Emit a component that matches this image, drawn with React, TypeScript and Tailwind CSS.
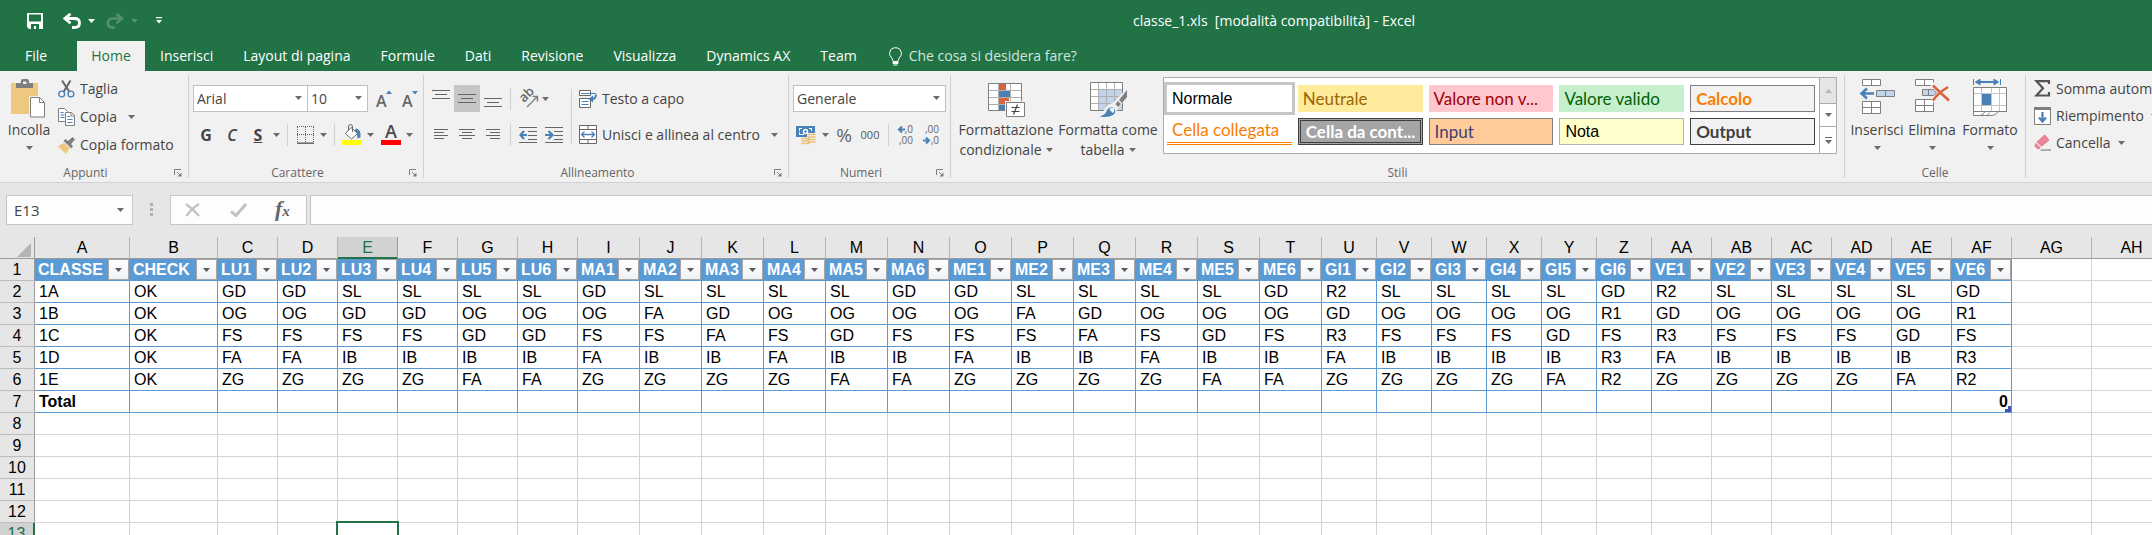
import type { ReactNode } from "react";

const GREY = "#7f7f7f";
const DARK = "#666666";
const BLUE = "#4a80b8";

function Caret({ className = "" }: { className?: string }) {
  return (
    <svg viewBox="0 0 7 4" className={`h-1 w-[7px] shrink-0 ${className}`} fill="currentColor" aria-hidden="true">
      <path d="M0 0h7L3.5 4z" />
    </svg>
  );
}

function CaretButton({ label, className = "" }: { label: string; className?: string }) {
  return (
    <button type="button" aria-label={label} className={`flex h-6 w-[11px] shrink-0 items-center justify-center text-[#6a6a6a] ${className}`}>
      <Caret />
    </button>
  );
}

function IconButton({ label, children, className = "" }: { label: string; children: ReactNode; className?: string }) {
  return (
    <button type="button" aria-label={label} className={`flex h-[27px] shrink-0 items-center justify-center ${className}`}>
      {children}
    </button>
  );
}

function Sep({ className = "h-[22px]" }: { className?: string }) {
  return <div className={`w-px shrink-0 bg-[#d0d0d0] ${className}`} />;
}

function Group({ label, launcher, className, children }: { label: string; launcher?: boolean; className: string; children: ReactNode }) {
  return (
    <>
      <section aria-label={label} className={`flex flex-col ${className}`}>
        <div className="flex h-[88px]">{children}</div>
        <div className="flex h-[19px] items-center text-xs leading-4 text-[#666]">
          <span className="flex-1 text-center">{label}</span>
          {launcher && (
            <button type="button" aria-label={`Opzioni ${label}`} className="mr-[3px] flex h-4 w-[14px] items-center justify-center">
              <svg viewBox="0 0 8 8" className="size-2" fill="none" stroke={GREY}>
                <path d="M.5 6V.5H7M3 3l3 3" />
                <path d="M7.5 3.5v4h-4z" fill={GREY} stroke="none" />
              </svg>
            </button>
          )}
        </div>
      </section>
      <Sep className="h-[103px]" />
    </>
  );
}

function Combo({ label, value, className }: { label: string; value: string; className: string }) {
  return (
    <div className={`relative h-[27px] shrink-0 ${className}`}>
      <select aria-label={label} defaultValue={value} className="size-full appearance-none border border-[#c0c0c0] bg-white pl-[3px] text-sm leading-5 text-[#444] outline-none">
        <option>{value}</option>
      </select>
      <Caret className="pointer-events-none absolute top-[11px] right-1.5 text-[#6a6a6a]" />
    </div>
  );
}

/* ---------- icons ---------- */

function PasteIcon() {
  return (
    <svg viewBox="0 0 36 39" className="h-[39px] w-9">
      <path d="M0 4h27v31H0z" fill="#edc87e" />
      <path d="M5 9V4h5V1.500Q10 0 12 0h4q2 0 2 1.500V4h4v5z" fill={GREY} />
      <path d="M12 2.500h3.500v2.500H12z" fill="#f0f0f0" />
      <path d="M18 17h11l6 6v16H18z" fill="#f0f0f0" />
      <path d="M19.500 18.500h9l5 5v14.500h-14z" fill="#fff" stroke={GREY} />
      <path d="M28.500 18.500v5h5" fill="none" stroke={GREY} />
    </svg>
  );
}

function CutIcon() {
  return (
    <svg viewBox="0 0 17 18" className="h-[18px] w-[17px]" fill="none">
      <path d="M4 0.500L11.500 12M12.500 .5L5.500 12" stroke={DARK} strokeWidth="2" />
      <circle cx="3.700" cy="14" r="2.900" stroke={BLUE} strokeWidth="1.400" />
      <circle cx="12.900" cy="14" r="2.900" stroke={BLUE} strokeWidth="1.400" />
    </svg>
  );
}

function CopyIcon() {
  return (
    <svg viewBox="0 0 17 18" className="h-[18px] w-[17px]" fill="#fff" stroke={GREY}>
      <path d="M.5.5h6l3 3v10h-9z" />
      <path d="M2.500 4.500h3M2.500 7h4M2.500 9.500h4" stroke={BLUE} />
      <path d="M7.500 4.500h6l3 3v10h-9z" />
      <path d="M13 4.500v3.500h3.500" fill="none" />
      <path d="M9.500 8.500h2.500M9.500 11.500h5M9.500 14.500h5" stroke={BLUE} />
    </svg>
  );
}

function BrushIcon() {
  return (
    <svg viewBox="0 0 17 17" className="h-[17px] w-[17px]">
      <path d="M6 5.500l5.500 5.500L8 17 0 9.500z" fill="#edc87e" />
      <path d="M5.500 4l2-2 2.500 2L14.500 0 17 2.500 13 7l2 2.500-2 2z" fill={GREY} />
      <path d="M6 4.800l6.500 6.500" stroke="#f0f0f0" />
    </svg>
  );
}

function Lines({ rows, className = "" }: { rows: number[][]; className?: string }) {
  return (
    <svg viewBox="0 0 18 20" className={`h-5 w-[18px] ${className}`} stroke={DARK} fill="none">
      {rows.map(([x1, x2, y]) => (
        <path key={y} d={`M${x1} ${y + 0.5}H${x2}`} />
      ))}
    </svg>
  );
}

function IndentIcon({ right }: { right?: boolean }) {
  return (
    <svg viewBox="0 0 18 18" className="h-[18px] w-[18px]" fill="none">
      <path d="M0 1.500h18M9 5.500h9M9 9.500h9M9 13.500h9M0 16.500h18" stroke={DARK} />
      {right ? (
        <path d="M0 9h6M3.500 5l4 4-4 4" stroke={BLUE} strokeWidth="2.200" />
      ) : (
        <path d="M8 9H2M5 5L1.500 9 5 13" stroke={BLUE} strokeWidth="2.200" />
      )}
    </svg>
  );
}

function WrapIcon() {
  return (
    <svg viewBox="0 0 18 18" className="h-[18px] w-[18px] shrink-0" fill="none">
      <path d="M.5.5h11v5H.5zM.5 8.500h11v9H.5z" fill="#fff" stroke={DARK} />
      <path d="M2 3.500h15M2.500 11.500h7M2.500 14.500h7" stroke={BLUE} />
      <path d="M17 4.500q0 5-6 5" stroke={BLUE} strokeWidth="2" />
      <path d="M14 5.500v7L9.500 9z" fill={BLUE} />
    </svg>
  );
}

function MergeIcon() {
  return (
    <svg viewBox="0 0 18 19" className="h-[19px] w-[18px] shrink-0" fill="none">
      <path d="M.5.500h17v18H.5z" fill="#fff" stroke={DARK} />
      <path d="M.5 4.500h17M.5 14.500h17M9 .5v4M9 14.500v4" stroke={DARK} />
      <path d="M2.500 9.500h13M5.500 6.500l-3 3 3 3M12.500 6.500l3 3-3 3" stroke={BLUE} strokeWidth="1.300" />
    </svg>
  );
}

function OrientIcon() {
  return (
    <svg viewBox="0 0 19 19" className="h-[19px] w-[19px] overflow-visible" fill="none">
      <text x="0" y="0" fontSize="13" fontWeight="600" fill={DARK} transform="translate(5 14) rotate(-45)">
        ab
      </text>
      <path d="M8 18l10-10M13.500 7.500h5v5" stroke={GREY} strokeWidth="1.400" />
    </svg>
  );
}

function FontSizeIcon({ up }: { up?: boolean }) {
  return (
    <svg viewBox="0 0 16 18" className="h-[18px] w-4 overflow-visible">
      <text x="0" y="17" fontSize="16" fontWeight="600" fill={DARK}>
        A
      </text>
      <path d={up ? "M10 4l3-3.500L16 4z" : "M10 1h6l-3 3.500z"} fill={BLUE} />
    </svg>
  );
}

function BordersIcon() {
  return (
    <svg viewBox="0 0 17 18" className="h-[18px] w-[17px]" fill="none" stroke={DARK}>
      <path d="M0 .5h17M.5 1v16M8.500 1v16M16.500 1v16M0 8.500h17" strokeDasharray="1 1" />
      <path d="M0 17.200h17" strokeWidth="1.500" />
    </svg>
  );
}

function FillIcon() {
  return (
    <svg viewBox="0 0 20 21" className="h-[21px] w-5" fill="none">
      <path d="M0 16h20v5H0z" fill="#ff0" />
      <path d="M14 4.500q5.500 1 4.500 9l-3 1q0-5-3-8z" fill={BLUE} />
      <path d="M9 3.500l6.500 6L9.500 15 3.500 9.500z" fill="#fff" stroke={DARK} />
      <path d="M6.500 6V3q0-2.500 2-2.500t2 2.500v5" stroke={DARK} />
    </svg>
  );
}

function FontColorIcon() {
  return (
    <svg viewBox="0 0 20 21" className="h-[21px] w-5 overflow-visible">
      <text x="10" y="14" fontSize="18" fontWeight="600" textAnchor="middle" fill="#4a4a4a">
        A
      </text>
      <path d="M0 16h20v5H0z" fill="red" />
    </svg>
  );
}

function MoneyIcon() {
  return (
    <svg viewBox="0 0 20 20" className="h-5 w-5">
      <path d="M0 1h19v11H0z" fill={BLUE} />
      <path d="M3 3h3v1H4v2H3zM16 3h-3v1h2v2h1zM3 10h5V9H4V7H3z" fill="#fff" />
      <circle cx="9.500" cy="6.500" r="2.700" fill="#fff" />
      <circle cx="9.500" cy="6.500" r="1.200" fill={BLUE} />
      <path d="M11 8h9v10h-5v2H5v-8h6z" fill="#f0f0f0" />
      <path d="M12 9.500h7M12 12h7M12 14.500h7M12 17h7M6 13.500h7M6 16h7M6 18.500h7" stroke="#edc078" strokeWidth="1.600" strokeLinecap="round" />
    </svg>
  );
}

function DecimalIcon({ more }: { more?: boolean }) {
  return (
    <svg viewBox="0 0 17 20" className="h-5 w-[17px] overflow-visible" fill={DARK} fontSize="10">
      <text x="16" y="8" textAnchor="end">{more ? ",0" : ",00"}</text>
      <text x="16" y="19" textAnchor="end">{more ? ",00" : ",0"}</text>
      {more ? (
        <path d="M8 4.500H3M5 1.500l-3 3 3 3" stroke={BLUE} strokeWidth="2" fill="none" />
      ) : (
        <path d="M0 15.500h5M3 12.500l3 3-3 3" stroke={BLUE} strokeWidth="2" fill="none" />
      )}
    </svg>
  );
}

function CondFormatIcon() {
  return (
    <svg viewBox="0 0 37 34" className="h-[34px] w-[37px]">
      <path d="M.5.5h33v27H.5z" fill="#fff" />
      <path d="M11 1h7v6h-7zM11 15h10v6H11z" fill="#d9633f" />
      <path d="M11 8h11v6H11zM11 22h7v5h-7z" fill={BLUE} />
      <path d="M10.500 0v28M22.500 0v28M1 7.500h33M1 14.500h33M1 21.500h33" stroke="#b0b0b0" fill="none" />
      <path d="M.5.5h33v27H.5z" stroke={GREY} fill="none" />
      <path d="M17 18h20v16H17z" fill="#f0f0f0" />
      <path d="M18.500 19.500h18v14h-18z" fill="#fff" stroke={GREY} />
      <path d="M23.500 24.500h8M23.500 28.500h8M29.500 21.500l-4 10" stroke="#444" strokeWidth="1.200" />
    </svg>
  );
}

function TableFormatIcon() {
  return (
    <svg viewBox="0 0 37 35" className="h-[35px] w-[37px]">
      <path d="M.5.5h32v28H.5z" fill="#fff" />
      <path d="M9 8h23v20H9z" fill="#c1d4e9" />
      <path d="M8.500 0v28M16.500 0v28M24.500 0v28M1 7.500h32M1 14.500h32M1 21.500h32" stroke="#b0b0b0" fill="none" />
      <path d="M.5.5h32v28H.5z" stroke={GREY} fill="none" />
      <path d="M37 6v10l-8 9-6 10H9l8-11 8-5z" fill="#f0f0f0" />
      <path d="M37 8v7l-5 6-3-3zM28 19l3 3-3 3-2.500-3z" fill={GREY} />
      <path d="M10 34.500q6-2 7-6.500 3-4 7-2 3 4-1 7-5 3-13 1.500z" fill={BLUE} />
      <path d="M19.500 28q1-3 4-2 2 3-1 5-1-2-3-3z" fill="#fff" />
    </svg>
  );
}

function InsertCellsIcon() {
  return (
    <svg viewBox="0 0 37 36" className="h-9 w-[37px]" fill="#fff" stroke={GREY}>
      <path d="M3.500.5h18v6h-18zM12.500.5v6M3.500 22.500h18v12h-18zM12.500 22.500v12M3.500 28.500h18" />
      <path d="M17.500 11.500h18v6h-18zM26.500 11.500v6" fill="#c1d4e9" />
      <path d="M15 14.500H3M8 9.500l-5.500 5 5.500 5" stroke={BLUE} strokeWidth="2.600" fill="none" />
    </svg>
  );
}

function DeleteCellsIcon() {
  return (
    <svg viewBox="0 0 36 34" className="h-[34px] w-9" fill="#fff" stroke={GREY}>
      <path d="M1.500.5h18v6h-18zM10.500.5v6M1.500 20.500h18v12h-18zM10.500 20.500v12M1.500 26.500h18" />
      <path d="M8.500 10.500h11l3 3.500-3 2.500h-11zM14.500 10.500v6" fill="#c1d4e9" />
      <path d="M18 5l18 17.500M35 7L19 23" stroke="#f0f0f0" strokeWidth="5" />
      <path d="M19 6.500q8 8 16 15M34 8q-10 6-15 13.500" stroke="#d9633f" strokeWidth="2.600" fill="none" />
    </svg>
  );
}

function FormatCellsIcon() {
  return (
    <svg viewBox="0 0 34 38" className="h-[38px] w-[34px]" fill="none" stroke={GREY}>
      <path d="M.5 0v6M27.500 0v6" stroke={BLUE} />
      <path d="M4 3h20M7.500.5l-4 2.500 4 2.500M20.500.5l4 2.500-4 2.500" stroke={BLUE} strokeWidth="2" />
      <path d="M.5 8.500h33v24H25q-2 4-6 4H.5z" fill="#fff" />
      <path d="M8.500 9v23M18.500 9v23M26.500 9v23M1 14.500h32M1 26.500h32" stroke="#c4c4c4" />
      <path d="M9 15h9v11H9z" fill={BLUE} stroke="none" />
      <path d="M.5 32.500h33M12 32.500q-2 4-5 4M14 36.500l3-3" />
    </svg>
  );
}

function SumIcon() {
  return (
    <svg viewBox="0 0 17 17" className="h-[17px] w-[17px] shrink-0" fill="none">
      <path d="M15 4V1.200H2.500L9 8.200l-6.700 7.300H15V12" stroke="#555" strokeWidth="2.200" />
    </svg>
  );
}

function FillDownIcon() {
  return (
    <svg viewBox="0 0 17 18" className="h-[18px] w-[17px] shrink-0">
      <path d="M.5.5h16v17H.5z" fill="#fff" stroke={GREY} />
      <path d="M0 0h17v3H0z" fill={GREY} />
      <path d="M8.500 5v9M5 10.500l3.500 4 3.500-4" stroke={BLUE} strokeWidth="2.200" fill="none" />
    </svg>
  );
}

function EraserIcon() {
  return (
    <svg viewBox="0 0 18 17" className="h-[17px] w-[17px] shrink-0 overflow-visible">
      <path d="M10.500 0.500Q11 0 12 .5l4 4.500q.5 1 0 1.500L8 13 2.500 8z" fill="#e88496" />
      <path d="M1.800 8.800L7 13.800 5.500 15.500q-1 .5-2 0L.8 12.800q-.8-1 0-2z" fill="#e88496" />
      <path d="M7 16.500h11" stroke={DARK} />
    </svg>
  );
}

/* ---------- title bar and tabs ---------- */

const tabs = ["Inserisci", "Layout di pagina", "Formule", "Dati", "Revisione", "Visualizza", "Dynamics AX", "Team"];

function TitleBar() {
  return (
    <header className="grid h-[41px] grid-cols-[1133fr_1019fr] items-center text-white">
      <div className="flex items-center pl-[27px]">
        <button type="button" aria-label="Salva">
          <svg viewBox="0 0 16 16" className="size-4">
            <path d="M0 0h16v16H2l-2-2z" fill="#fff" />
            <path d="M2 1.500h12v7H2zM4 11h8v5H9v-3H7v3H4z" fill="#217346" />
          </svg>
        </button>
        <button type="button" aria-label="Annulla" className="ml-5">
          <svg viewBox="0 0 18 16" className="h-4 w-[18px]" fill="none" stroke="#fff">
            <path d="M2 5.500h9.500q5 0 5 4.500t-5 4.500H9" strokeWidth="2.800" />
            <path d="M7.500.8l-5.500 4.700 5.500 4.700" strokeWidth="2.800" />
          </svg>
        </button>
        <CaretButton label="Opzioni annulla" className="ml-[5px] text-white" />
        <button type="button" aria-label="Ripristina" className="ml-[9px]">
          <svg viewBox="0 0 18 16" className="h-4 w-[18px]" fill="none" stroke="#56906f">
            <path d="M15.500 5.500H7q-5 0-5 4.500t5 4.500h2" strokeWidth="2.600" />
            <path d="M10.500.8l5.500 4.700-5.500 4.700" strokeWidth="2.600" />
          </svg>
        </button>
        <CaretButton label="Opzioni ripristina" className="ml-[5px] text-[#56906f]" />
        <button type="button" aria-label="Personalizza barra di accesso rapido" className="ml-4">
          <svg viewBox="0 0 7 7" className="size-[7px]" fill="#fff">
            <path d="M0 0h6v1.300H0zM0 3h6L3 6.500z" />
          </svg>
        </button>
      </div>
      <h1 className="text-sm leading-5 whitespace-pre">classe_1.xls  [modalità compatibilità] - Excel</h1>
    </header>
  );
}

function TabBar() {
  return (
    <nav className="flex h-[30px] items-center text-sm leading-5 text-white">
      <button type="button" className="mr-[5px] w-[72px] text-center">File</button>
      <button type="button" className="h-full w-[68px] bg-[#f1f1f1] text-[#217346]">Home</button>
      <div className="ml-[15px] flex gap-[30px]">
        {tabs.map((t) => (
          <button type="button" key={t} className="whitespace-nowrap">{t}</button>
        ))}
      </div>
      <button type="button" className="ml-8 flex items-center gap-[7px] text-[#d5e5db]">
        <svg viewBox="0 0 13 19" className="h-[19px] w-[13px]" fill="none" stroke="#fff">
          <path d="M4 14.500q0-2.500-2-4.500Q.6 8.500.6 6.500 1 .8 6.500.7q5.500.1 5.900 5.800 0 2-1.400 3.500-2 2-2 4.500z" />
          <path d="M4 15h5v1.500H4zM4.500 18h4" fill="#fff" />
        </svg>
        <span>Che cosa si desidera fare?</span>
      </button>
    </nav>
  );
}

/* ---------- ribbon ---------- */

function SmallCommand({ icon, label, caret, className = "" }: { icon: ReactNode; label: string; caret?: string; className?: string }) {
  return (
    <button type="button" className={`flex shrink-0 items-center gap-[5px] text-left whitespace-nowrap ${className}`}>
      {icon}
      <span>{label}</span>
      {caret && <Caret className={`text-[#6a6a6a] ${caret}`} />}
    </button>
  );
}

function LargeCommand({ icon, label, className }: { icon: ReactNode; label: string; className: string }) {
  return (
    <button type="button" className={`flex flex-col items-center ${className}`}>
      <span className="flex h-[45px] items-start justify-center pt-1">{icon}</span>
      <span className="leading-5 whitespace-nowrap">{label}</span>
      <Caret className="mt-1.5 text-[#6a6a6a]" />
    </button>
  );
}

type Style = { label: string; look: string };

const styles: Style[] = [
  { label: "Normale", look: "bg-white text-black font-[Liberation_Sans,sans-serif] text-base outline-3 outline-[#c6c6c6]" },
  { label: "Neutrale", look: "bg-[#ffeb9c] text-[#9c6500]" },
  { label: "Valore non v...", look: "bg-[#ffc7ce] text-[#9c0006]" },
  { label: "Valore valido", look: "bg-[#c6efce] text-[#006100]" },
  { label: "Calcolo", look: "bg-[#f2f2f2] text-[#fa7d00] font-bold border border-[#7f7f7f]" },
  { label: "Cella collegata", look: "bg-white text-[#fa7d00] border-b-3 border-double border-b-[#ff8001]" },
  { label: "Cella da cont...", look: "bg-[#a5a5a5] text-white font-bold border-3 border-double border-[#3f3f3f]" },
  { label: "Input", look: "bg-[#ffcc99] text-[#3f3f76] border border-[#7f7f7f]" },
  { label: "Nota", look: "bg-[#ffffcc] text-black font-[Liberation_Sans,sans-serif] text-base border border-[#b2b2b2]" },
  { label: "Output", look: "bg-[#f2f2f2] text-[#3f3f3f] font-bold border border-[#3f3f3f]" },
];

function StyleGallery() {
  return (
    <div className="mt-[2px] mr-[7px] ml-1 flex h-[77px] flex-1 border border-[#ababab] bg-white">
      <div className="grid flex-1 auto-rows-[27px] grid-cols-5 gap-x-1.5 gap-y-1.5 py-[7px] pr-1 pl-[3px]">
        {styles.map((s) => (
          <button type="button" key={s.label} className="text-left font-[Lato,sans-serif] text-[17px] leading-5 whitespace-nowrap">
            <span className={`flex h-full items-center pl-[5px] ${s.look}`}>{s.label}</span>
          </button>
        ))}
      </div>
      <div className="flex w-[17px] flex-col divide-y divide-[#ababab] border-l border-[#ababab] text-[#6a6a6a]">
        <button type="button" aria-label="Riga precedente" className="flex h-[26px] items-center justify-center bg-[#e5e5e5] text-[#b5b5b5]">
          <Caret className="rotate-180" />
        </button>
        <button type="button" aria-label="Riga successiva" className="flex h-[23px] items-center justify-center">
          <Caret />
        </button>
        <button type="button" aria-label="Altri stili" className="flex flex-1 flex-col items-center justify-center gap-0.5">
          <span className="h-px w-[7px] bg-current" />
          <Caret />
        </button>
      </div>
    </div>
  );
}

function Ribbon() {
  return (
    <div className="flex h-28 overflow-hidden border-b border-[#d2d2d2] bg-[#f1f1f1] pt-1 text-sm leading-5 text-[#444]">
      <Group label="Appunti" launcher className="w-[188px] shrink-0">
        <LargeCommand icon={<PasteIcon />} label="Incolla" className="w-[58px]" />
        <div className="flex flex-col">
          <SmallCommand icon={<CutIcon />} label="Taglia" className="h-7" />
          <SmallCommand icon={<CopyIcon />} label="Copia" caret="ml-1.5" className="h-7" />
          <SmallCommand icon={<BrushIcon />} label="Copia formato" className="h-7" />
        </div>
      </Group>

      <Group label="Carattere" launcher className="w-[234px] shrink-0">
        <div className="flex flex-col gap-[9px] pt-[10px] pl-1">
          <div className="flex">
            <Combo label="Tipo di carattere" value="Arial" className="w-[115px]" />
            <Combo label="Dimensione carattere" value="10" className="-ml-px w-[61px]" />
            <IconButton label="Aumenta dimensione carattere" className="ml-[3px] w-[26px]"><FontSizeIcon up /></IconButton>
            <IconButton label="Riduci dimensione carattere" className="w-[26px]"><FontSizeIcon /></IconButton>
          </div>
          <div className="flex items-center">
            <IconButton label="Grassetto" className="w-[26px] text-base font-bold">G</IconButton>
            <IconButton label="Corsivo" className="w-[26px] text-base font-semibold italic">C</IconButton>
            <IconButton label="Sottolineato" className="w-[26px] text-base font-bold underline">S</IconButton>
            <CaretButton label="Opzioni sottolineatura" />
            <Sep className="ml-[5px] h-[22px]" />
            <IconButton label="Bordi" className="ml-2 w-[18px]"><BordersIcon /></IconButton>
            <CaretButton label="Opzioni bordi" className="ml-1" />
            <Sep className="ml-[5px] h-[22px]" />
            <IconButton label="Colore riempimento" className="ml-[7px] w-5"><FillIcon /></IconButton>
            <CaretButton label="Opzioni riempimento" className="ml-[3px]" />
            <IconButton label="Colore carattere" className="ml-[5px] w-5"><FontColorIcon /></IconButton>
            <CaretButton label="Opzioni colore carattere" className="ml-[3px]" />
          </div>
        </div>
      </Group>

      <Group label="Allineamento" launcher className="w-[364px] shrink-0">
        <div className="flex flex-col gap-[9px] pt-[10px] pl-1">
          <div className="flex items-center">
            <IconButton label="Allinea in alto" className="w-[26px]">
              <Lines rows={[[0, 18, 1], [3, 15, 5], [0, 18, 9]]} />
            </IconButton>
            <IconButton label="Allinea al centro verticalmente" className="w-[26px] bg-[#c6c6c6]">
              <Lines rows={[[0, 18, 5], [3, 15, 9], [0, 18, 13]]} />
            </IconButton>
            <IconButton label="Allinea in basso" className="w-[26px]">
              <Lines rows={[[0, 18, 9], [3, 15, 13], [0, 18, 17]]} />
            </IconButton>
            <Sep className="ml-1 h-[22px]" />
            <IconButton label="Orientamento" className="ml-2 w-[19px]"><OrientIcon /></IconButton>
            <CaretButton label="Opzioni orientamento" className="ml-[2px]" />
          </div>
          <div className="flex items-center">
            <IconButton label="Allinea a sinistra" className="w-[26px]">
              <Lines rows={[[2, 16, 4], [2, 12, 7], [2, 16, 10], [2, 12, 13]]} />
            </IconButton>
            <IconButton label="Allinea al centro" className="w-[26px]">
              <Lines rows={[[1, 17, 4], [4, 14, 7], [1, 17, 10], [4, 14, 13]]} />
            </IconButton>
            <IconButton label="Allinea a destra" className="w-[26px]">
              <Lines rows={[[2, 16, 4], [6, 16, 7], [2, 16, 10], [6, 16, 13]]} />
            </IconButton>
            <Sep className="ml-1 h-[22px]" />
            <IconButton label="Riduci rientro" className="ml-2 w-[18px]"><IndentIcon /></IconButton>
            <IconButton label="Aumenta rientro" className="ml-2 w-[18px]"><IndentIcon right /></IconButton>
          </div>
        </div>
        <Sep className="mt-[14px] ml-2 h-[55px]" />
        <div className="flex flex-col gap-[9px] pt-[10px] pl-[7px]">
          <SmallCommand icon={<WrapIcon />} label="Testo a capo" className="h-[27px]" />
          <SmallCommand icon={<MergeIcon />} label="Unisci e allinea al centro" caret="ml-1.5" className="h-[27px]" />
        </div>
      </Group>

      <Group label="Numeri" launcher className="w-[161px] shrink-0">
        <div className="flex flex-col gap-[9px] pt-[10px] pl-1">
          <Combo label="Formato numero" value="Generale" className="w-[153px]" />
          <div className="flex items-center">
            <IconButton label="Formato valuta" className="ml-[3px] w-5"><MoneyIcon /></IconButton>
            <CaretButton label="Opzioni valuta" className="ml-1" />
            <IconButton label="Stile percentuale" className="ml-1 w-[18px] text-[19px] text-[#666]">%</IconButton>
            <IconButton label="Stile separatore" className="ml-2 w-[18px] text-[11px] text-[#555]">000</IconButton>
            <Sep className="ml-[9px] h-[22px]" />
            <IconButton label="Aumenta decimali" className="ml-2 w-[17px]"><DecimalIcon more /></IconButton>
            <IconButton label="Diminuisci decimali" className="ml-[9px] w-[17px]"><DecimalIcon /></IconButton>
          </div>
        </div>
      </Group>

      <Group label="Stili" className="min-w-0 flex-1">
        <button type="button" className="ml-1 flex w-[102px] shrink-0 flex-col items-center pt-2">
          <CondFormatIcon />
          <span className="mt-[3px] leading-5 whitespace-nowrap">Formattazione</span>
          <span className="flex items-center gap-1 leading-5">condizionale <Caret className="text-[#6a6a6a]" /></span>
        </button>
        <button type="button" className="flex w-[102px] shrink-0 flex-col items-center pt-[7px]">
          <TableFormatIcon />
          <span className="mt-[3px] leading-5 whitespace-nowrap">Formatta come</span>
          <span className="flex items-center gap-1 leading-5">tabella <Caret className="text-[#6a6a6a]" /></span>
        </button>
        <StyleGallery />
      </Group>

      <Group label="Celle" className="w-[180px] shrink-0">
        <LargeCommand icon={<InsertCellsIcon />} label="Inserisci" className="ml-1 w-[56px]" />
        <LargeCommand icon={<DeleteCellsIcon />} label="Elimina" className="w-[54px]" />
        <LargeCommand icon={<FormatCellsIcon />} label="Formato" className="w-[62px]" />
      </Group>

      <section aria-label="Modifica" className="flex w-[126px] shrink-0 flex-col overflow-hidden pl-2">
        <SmallCommand icon={<SumIcon />} label="Somma automatica" className="h-[27px]" />
        <SmallCommand icon={<FillDownIcon />} label="Riempimento" caret="ml-0.5" className="h-[27px]" />
        <SmallCommand icon={<EraserIcon />} label="Cancella" caret="ml-0.5" className="h-[27px]" />
      </section>
    </div>
  );
}

/* ---------- formula bar ---------- */

function FormulaBar() {
  return (
    <div className="flex h-[54px] shrink-0 items-start pt-3 pl-1.5">
      <div className="relative h-[30px] w-[127px]">
        <input aria-label="Casella nome" defaultValue="E13" className="size-full border border-[#c6c6c6] bg-[#fdfdfd] pl-[7px] text-[15px] text-[#444] outline-none" />
        <Caret className="pointer-events-none absolute top-[13px] right-[9px] text-[#6a6a6a]" />
      </div>
      <div className="mt-2 flex w-[37px] flex-col items-center gap-[2px]">
        <span className="size-[3px] bg-[#b0b0b0]" />
        <span className="size-[3px] bg-[#b0b0b0]" />
        <span className="size-[3px] bg-[#b0b0b0]" />
      </div>
      <div className="flex h-[30px] w-[137px] items-center border border-[#c6c6c6] bg-[#fdfdfd] pl-[14px]">
        <button type="button" aria-label="Annulla">
          <svg viewBox="0 0 15 14" className="h-3.5 w-[15px]" stroke="#c2c2c2" strokeWidth="2.200" fill="none"><path d="M1 1q7 5 13 12M14 1Q6 6 1.500 13" /></svg>
        </button>
        <button type="button" aria-label="Invio" className="ml-[30px]">
          <svg viewBox="0 0 17 14" className="h-3.5 w-[17px]" stroke="#c2c2c2" strokeWidth="3" fill="none"><path d="M1 8.500l5 4L16 1" /></svg>
        </button>
        <button type="button" aria-label="Inserisci funzione" className="ml-7 font-[Liberation_Serif,serif] text-[22px] leading-6 font-bold text-[#666] italic">
          f<span className="text-[15px]">x</span>
        </button>
      </div>
      <input aria-label="Barra della formula" className="ml-[3px] h-[30px] min-w-0 flex-1 border border-r-0 border-[#c6c6c6] bg-[#fdfdfd] px-2 text-[15px] outline-none" />
    </div>
  );
}

/* ---------- worksheet ---------- */

const columns: { id: string; width: number; field: string }[] = [
  { id: "A", width: 95, field: "CLASSE" },
  { id: "B", width: 88, field: "CHECK" },
  ..."C D E F G H".split(" ").map((id, i) => ({ id, width: 60, field: `LU${i + 1}` })),
  ..."I J K L M N".split(" ").map((id, i) => ({ id, width: 62, field: `MA${i + 1}` })),
  ..."O P Q R S T".split(" ").map((id, i) => ({ id, width: 62, field: `ME${i + 1}` })),
  ..."U V W X Y Z".split(" ").map((id, i) => ({ id, width: 55, field: `GI${i + 1}` })),
  ..."AA AB AC AD AE AF".split(" ").map((id, i) => ({ id, width: 60, field: `VE${i + 1}` })),
  { id: "AG", width: 80, field: "" },
  { id: "AH", width: 80, field: "" },
];

const FIELDS = 32;

const data: string[][] = [
  "1A OK GD GD SL SL SL SL GD SL SL SL SL GD GD SL SL SL SL GD R2 SL SL SL SL GD R2 SL SL SL SL GD",
  "1B OK OG OG GD GD OG OG OG FA GD OG OG OG OG FA GD OG OG OG GD OG OG OG OG R1 GD OG OG OG OG R1",
  "1C OK FS FS FS FS GD GD FS FS FA FS GD FS FS FS FA FS GD FS R3 FS FS FS GD FS R3 FS FS FS GD FS",
  "1D OK FA FA IB IB IB IB FA IB IB FA IB IB FA IB IB FA IB IB FA IB IB IB IB R3 FA IB IB IB IB R3",
  "1E OK ZG ZG ZG ZG FA FA ZG ZG ZG ZG FA FA ZG ZG ZG ZG FA FA ZG ZG ZG ZG FA R2 ZG ZG ZG ZG FA R2",
].map((r) => r.split(" "));

const TABLE_CELL = "border-r border-b border-[#5b9bd5] bg-white p-0 pt-px pl-1";
const EMPTY_CELL = "border-r border-b border-[#d4d4d4] bg-white p-0";

function RowHeader({ n, active }: { n: number; active?: boolean }) {
  return (
    <th
      scope="row"
      className={
        active
          ? "border-r-2 border-b border-r-[#217346] border-b-[#bdbdbd] bg-[#d2d2d2] p-0 pt-px text-center font-normal text-[#217346]"
          : "border-r border-b border-r-[#9b9b9b] border-b-[#bdbdbd] bg-[#e6e6e6] p-0 pt-px text-center font-normal"
      }
    >
      {n}
    </th>
  );
}

function Blanks({ from }: { from: number }) {
  return (
    <>
      {columns.slice(from).map((c) => (
        <td key={c.id} className={EMPTY_CELL} />
      ))}
    </>
  );
}

function Sheet() {
  return (
    <main className="min-h-0 flex-1 overflow-hidden">
      <table className="w-[2171px] table-fixed border-separate border-spacing-0 font-[Liberation_Sans,Arial,sans-serif] text-base leading-5 text-black">
        <colgroup>
          <col className="w-[35px]" />
          {columns.map((c) => (
            <col key={c.id} style={{ width: c.width }} />
          ))}
        </colgroup>
        <thead>
          <tr className="h-[22px]">
            <th aria-label="Seleziona tutto" className="border-r border-b border-[#9b9b9b] bg-[#e6e6e6] p-0">
              <svg viewBox="0 0 14 14" className="mt-1 mr-[3px] ml-auto block size-3.5" fill="#b4b4b4"><path d="M14 0v14H0z" /></svg>
            </th>
            {columns.map((c) => (
              <th
                key={c.id}
                scope="col"
                className={
                  c.id === "E"
                    ? "border-r border-b border-r-[#9b9b9b] border-b-[#217346] bg-[#d2d2d2] p-0 pt-px text-center font-normal text-[#217346] shadow-[inset_0_-1px_0_#217346]"
                    : "border-r border-b border-r-[#b4b4b4] border-b-[#9b9b9b] bg-[#e6e6e6] p-0 pt-px text-center font-normal"
                }
              >
                {c.id}
              </th>
            ))}
          </tr>
        </thead>
        <tbody>
          <tr className="h-[22px]">
            <RowHeader n={1} />
            {columns.slice(0, FIELDS).map((c) => (
              <td key={c.id} className="border-r border-b border-[#5b9bd5] bg-[#5b9bd5] p-0 pl-[3px] font-bold text-white">
                <div className="flex h-[21px] items-center justify-between">
                  <span className="pt-px">{c.field}</span>
                  <button type="button" aria-label={`Filtra ${c.field}`} className="flex h-[21px] w-[21px] items-center justify-center border border-[#a6a6a6] bg-linear-to-b from-white to-[#eef1f6] text-[#5a5a5a]">
                    <Caret />
                  </button>
                </div>
              </td>
            ))}
            <Blanks from={FIELDS} />
          </tr>
          {data.map((row, r) => (
            <tr key={row[0]} className="h-[22px]">
              <RowHeader n={r + 2} />
              {row.map((v, i) => (
                <td key={columns[i].id} className={TABLE_CELL}>{v}</td>
              ))}
              <Blanks from={FIELDS} />
            </tr>
          ))}
          <tr className="h-[22px] font-bold">
            <RowHeader n={7} />
            <td className={TABLE_CELL}>Total</td>
            {columns.slice(1, FIELDS - 1).map((c) => (
              <td key={c.id} className={TABLE_CELL} />
            ))}
            <td className={`${TABLE_CELL} relative pr-[3px] text-right`}>
              0
              <svg viewBox="0 0 6 6" className="absolute right-0 bottom-0 size-1.5" fill="#3f51b5"><path d="M3 0h3v6H0V3h3z" /></svg>
            </td>
            <Blanks from={FIELDS} />
          </tr>
          {[8, 9, 10, 11, 12, 13].map((n) => (
            <tr key={n} className="h-[22px]">
              <RowHeader n={n} active={n === 13} />
              {columns.map((c) =>
                n === 13 && c.id === "E" ? (
                  <td key={c.id} className={`${EMPTY_CELL} relative`}>
                    <div className="absolute -inset-x-0.5 -top-0.5 -bottom-0.5 border-2 border-[#217346]" />
                  </td>
                ) : (
                  <td key={c.id} className={EMPTY_CELL} />
                ),
              )}
            </tr>
          ))}
        </tbody>
      </table>
    </main>
  );
}

export default function App() {
  return (
    <div className="flex h-screen flex-col overflow-hidden bg-[#e6e6e6] font-[Open_Sans,Noto_Sans,sans-serif]">
      <div className="shrink-0 bg-[#217346]">
        <TitleBar />
        <TabBar />
      </div>
      <div className="shrink-0"><Ribbon /></div>
      <FormulaBar />
      <Sheet />
    </div>
  );
}
